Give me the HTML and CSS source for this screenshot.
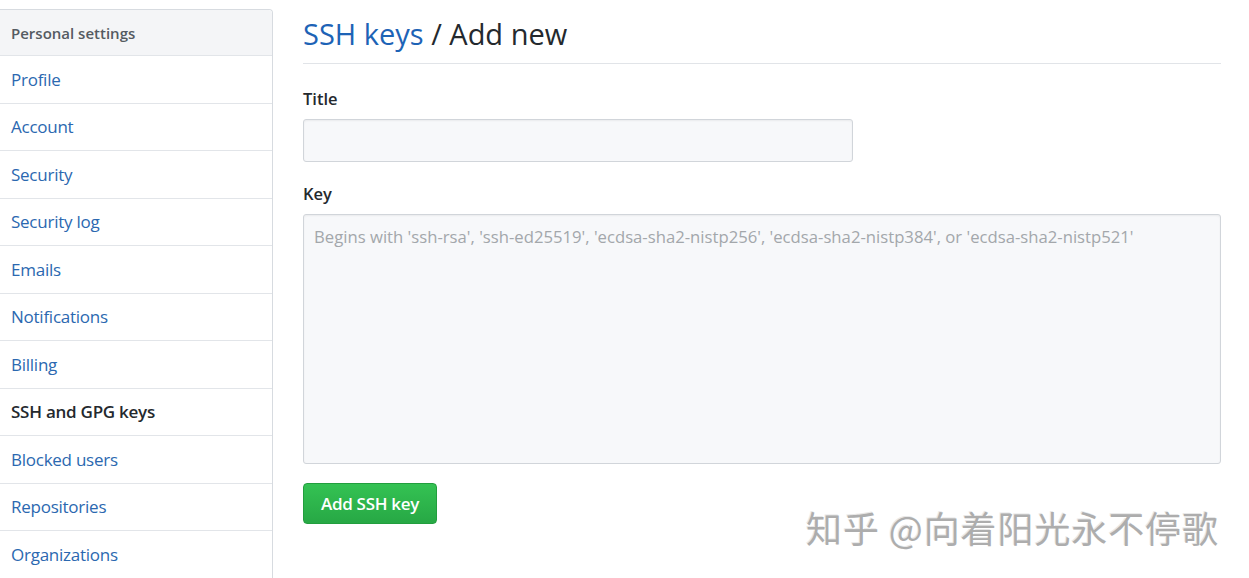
FILE: index.html
```html
<!DOCTYPE html>
<html lang="en">
<head>
<meta charset="utf-8">
<title>SSH keys / Add new</title>
<link rel="stylesheet" href="styles.css">
</head>
<body>
<div class="page">
  <nav class="sidebar">
    <div class="menu-header">Personal settings</div>
    <a class="menu-item" href="#">Profile</a>
    <a class="menu-item" href="#">Account</a>
    <a class="menu-item" href="#">Security</a>
    <a class="menu-item" href="#">Security log</a>
    <a class="menu-item" href="#">Emails</a>
    <a class="menu-item" href="#">Notifications</a>
    <a class="menu-item" href="#">Billing</a>
    <a class="menu-item selected" href="#">SSH and GPG keys</a>
    <a class="menu-item" href="#">Blocked users</a>
    <a class="menu-item" href="#">Repositories</a>
    <a class="menu-item" href="#">Organizations</a>
  </nav>
  <main class="content">
    <h2 class="subhead"><a href="#" class="crumb">SSH keys</a> / Add new</h2>
    <form class="form">
      <label class="label" for="title">Title</label>
      <input class="input title-input" id="title" type="text">
      <label class="label key-label" for="key">Key</label>
      <textarea class="input key-input" id="key" placeholder="Begins with 'ssh-rsa', 'ssh-ed25519', 'ecdsa-sha2-nistp256', 'ecdsa-sha2-nistp384', or 'ecdsa-sha2-nistp521'"></textarea>
      <div class="actions"><button type="button" class="btn">Add SSH key</button></div>
    </form>
  </main>
</div>
<div class="watermark">知乎 @向着阳光永不停歌</div>
</body>
</html>
```

FILE: styles.css
```css
* { box-sizing: border-box; }
html, body { margin: 0; padding: 0; background: #fff; }
body {
  font-family: "Open Sans", "Noto Sans", "Liberation Sans", sans-serif;
  color: #24292e;
  overflow: hidden;
  height: 578px;
}
.page {
  display: flex;
  align-items: flex-start;
}
.sidebar {
  width: 273px;
  flex: none;
  margin-top: 9px;
  border: 1px solid #d7dbe0;
  border-left: none;
  border-radius: 0 4px 0 0;
  display: flex;
  flex-direction: column;
}
.menu-header {
  height: 46px;
  background: #f4f5f7;
  border-bottom: 1px solid #e2e5e9;
  padding-left: 11px;
  display: flex;
  align-items: center;
  font-size: 15px;
  font-weight: 600;
  color: #555b62;
  border-radius: 0 4px 0 0;
}
.menu-item {
  height: 47.5px;
  border-bottom: 1px solid #e2e5e9;
  padding-left: 11px;
  display: flex;
  align-items: center;
  font-size: 17px;
  color: #2b68b0;
  text-decoration: none;
  letter-spacing: -0.25px;
}
.menu-item.selected {
  color: #24292e;
  font-weight: 600;
}
.content {
  margin-left: 30px;
  width: 918px;
  flex: none;
}
.subhead {
  margin: 0;
  height: 64px;
  padding-top: 12px;
  border-bottom: 1px solid #e1e4e8;
  font-size: 29px;
  font-weight: 400;
  line-height: 44px;
  color: #24292e;
  letter-spacing: 0;
}
.crumb {
  color: #1d63b6;
  text-decoration: none;
}
.form {
  display: flex;
  flex-direction: column;
  padding-top: 24px;
}
.label {
  font-size: 16.5px;
  font-weight: 600;
  line-height: 22px;
  margin-bottom: 9px;
  color: #24292e;
}
.key-label { margin-top: 21px; }
.input {
  border: 1px solid #d1d5da;
  border-radius: 3px;
  background: #f7f8fa;
  box-shadow: inset 0 1px 2px rgba(27, 31, 35, 0.06);
  font-family: inherit;
  outline: none;
}
.title-input {
  width: 550px;
  height: 43px;
}
.key-input {
  width: 918px;
  height: 250px;
  resize: none;
  padding: 10px 10px;
  font-size: 16.7px;
  letter-spacing: 0;
  line-height: 24px;
}
.key-input::placeholder { color: #a3a7ab; }
.actions { margin-top: 19px; }
.btn {
  height: 41px;
  width: 134px;
  border: 1px solid #229e3e;
  border-radius: 4px;
  background: linear-gradient(#34c253, #27a845);
  color: #fff;
  font-family: inherit;
  font-size: 17px;
  font-weight: 600;
  letter-spacing: -0.3px;
  padding: 0;
}
.watermark {
  position: absolute;
  left: 806px;
  top: 501px;
  font-family: "Noto Sans CJK SC", sans-serif;
  font-size: 36px;
  letter-spacing: 0.9px;
  color: #adadad;
  text-shadow: 1px 1px 0 #fff, -1px -1px 0 #e8e8e8;
  white-space: nowrap;
}
```
